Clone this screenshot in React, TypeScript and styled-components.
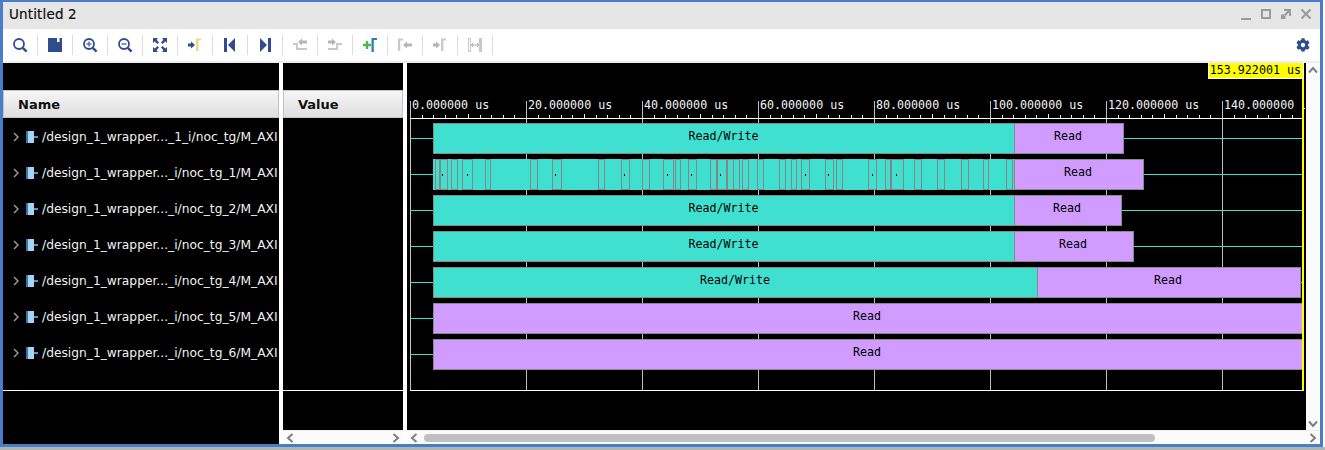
import React from "react";
import styled, { createGlobalStyle } from "styled-components";
import { FaCog } from "react-icons/fa";

const Global = createGlobalStyle`
  html, body {
    margin: 0;
    padding: 0;
    background: #fff;
  }
  body {
    font-family: "DejaVu Sans", sans-serif;
    overflow: hidden;
  }
`;

const Page = styled.div`
  width: 1325px;
  height: 450px;
  display: flex;
  flex-direction: column;
  background: #ffffff;
`;

const Frame = styled.div`
  width: 1323px;
  height: 447px;
  box-sizing: border-box;
  border: solid #4b7cc9;
  border-width: 2px 3px 3px 3px;
  display: flex;
  flex-direction: column;
  background: #fff;
`;

const BottomEdge = styled.div`
  height: 3px;
  background: #aeb6b4;
`;

const TitleBar = styled.div`
  height: 27px;
  flex: none;
  box-sizing: border-box;
  background: #e6e6e6;
  display: flex;
  align-items: center;
  justify-content: space-between;
  padding: 0 8px 3px 6px;
`;

const Title = styled.span`
  font-size: 13.5px;
  color: #111;
  letter-spacing: 0.15px;
  -webkit-text-stroke: 0.2px #111;
`;

const WindowButtons = styled.div`
  display: flex;
  gap: 8px;
`;

const WindowButton = styled.svg`
  width: 12px;
  height: 12px;
  fill: none;
  stroke: #9b9b9b;
  stroke-width: 2;
`;

const Toolbar = styled.div`
  height: 32px;
  flex: none;
  background: #fff;
  display: flex;
  align-items: center;
`;

const ToolButton = styled.div`
  width: 34px;
  height: 20px;
  flex: none;
  display: flex;
  align-items: center;
  justify-content: center;
`;

const ToolSeparator = styled.div`
  width: 1px;
  height: 20px;
  flex: none;
  background: #dcdcdc;
`;

const Settings = styled.div`
  margin-left: auto;
  margin-right: 10px;
  display: flex;
  color: #2f4d8c;
  font-size: 14px;
`;

const Panes = styled.div`
  flex: 1;
  min-height: 0;
  display: flex;
  background: #fff;
  border-top: 2px solid #eeeeee;
`;

const ListPane = styled.div<{ $width: number }>`
  width: ${(p) => p.$width}px;
  flex: none;
  display: flex;
  flex-direction: column;
  background: #000;
`;

const GapStrip = styled.div`
  height: 27px;
  flex: none;
`;

const ColumnHeader = styled.div`
  height: 28px;
  flex: none;
  box-sizing: border-box;
  border: 1px solid #c4c4c4;
  background: linear-gradient(#f6f6f6, #f0f0f0 25%, #dedede);
  display: flex;
  align-items: center;
  padding-left: 14px;
  font-size: 13px;
  font-weight: bold;
  color: #111;
`;

const Rows = styled.div`
  height: 273px;
  flex: none;
  box-sizing: border-box;
  padding-top: 1px;
  border-bottom: 1px solid #fff;
`;

const SignalRow = styled.div`
  height: 36px;
  display: flex;
  align-items: center;
  color: #f2f2f2;
  font-size: 12.25px;
  white-space: nowrap;
  overflow: hidden;
`;

const Expander = styled.svg`
  width: 6px;
  height: 10px;
  margin: 0 7px 0 10px;
  flex: none;
  fill: none;
  stroke: #9a9a9a;
  stroke-width: 1.5;
`;

const BusIcon = styled.svg`
  width: 12px;
  height: 12px;
  margin-right: 4px;
  flex: none;
`;

const ScrollBar = styled.div`
  height: 14px;
  flex: none;
  margin-top: auto;
  background: #fbfbfb;
  border-top: 1px solid #eeeeee;
  box-sizing: border-box;
  display: flex;
  align-items: center;
  justify-content: space-between;
  padding: 0 3px;
`;

const Arrow = styled.svg`
  width: 8px;
  height: 10px;
  flex: none;
  fill: none;
  stroke: #7f7f7f;
  stroke-width: 2;
`;

const ScrollThumb = styled.div`
  width: 731px;
  height: 8px;
  margin: 0 auto 0 6px;
  border-radius: 4px;
  background: #c0c0c0;
`;

const Divider = styled.div`
  width: 4px;
  flex: none;
  background: #fff;
`;

const WaveColumn = styled.div`
  width: 913px;
  flex: none;
  display: flex;
  flex-direction: column;
`;

const WaveBody = styled.div`
  flex: 1;
  min-height: 0;
  display: flex;
`;

const WaveCanvas = styled.div`
  position: relative;
  width: 899px;
  height: 367px;
  flex: none;
  background: #000;
`;

const WaveSvg = styled.svg`
  display: block;
  font-family: "DejaVu Sans Mono", monospace;
  font-size: 11.67px;
  shape-rendering: crispEdges;
  text {
    shape-rendering: auto;
  }
`;

const CursorLabel = styled.div`
  position: absolute;
  top: 0;
  right: 2px;
  width: 96px;
  height: 16px;
  box-sizing: border-box;
  border: 1px solid #fff;
  border-top: 0;
  background: #ffff00;
  color: #000;
  font-family: "DejaVu Sans Mono", monospace;
  font-size: 11.67px;
  line-height: 15px;
  text-align: right;
  padding-right: 2px;
  white-space: nowrap;
`;

const VerticalScroll = styled.div`
  width: 14px;
  flex: none;
  background: #fbfbfb;
  display: flex;
  flex-direction: column;
  align-items: center;
  justify-content: space-between;
  padding: 3px 0 2px;
  box-sizing: border-box;
`;

const ArrowV = styled.svg`
  width: 10px;
  height: 8px;
  fill: none;
  stroke: #7f7f7f;
  stroke-width: 2;
`;

const names = [
  "/design_1_wrapper..._1_i/noc_tg/M_AXI",
  "/design_1_wrapper..._i/noc_tg_1/M_AXI",
  "/design_1_wrapper..._i/noc_tg_2/M_AXI",
  "/design_1_wrapper..._i/noc_tg_3/M_AXI",
  "/design_1_wrapper..._i/noc_tg_4/M_AXI",
  "/design_1_wrapper..._i/noc_tg_5/M_AXI",
  "/design_1_wrapper..._i/noc_tg_6/M_AXI",
];

const TEAL = "#40e0d0";
const PURPLE = "#d09cff";
const EDGE = "#8a8a8a";

// x positions are in page pixels, the svg viewBox starts at 407,63
const bars = [
  { split: 1014, end: 1124 },
  { split: 1014, end: 1144 },
  { split: 1014, end: 1122 },
  { split: 1014, end: 1134 },
  { split: 1037, end: 1301 },
  { split: 433, end: 1303 },
  { split: 433, end: 1303 },
];

const bursts = [
  [435, 440], [439, 447], [451, 457], [462, 472], [485, 490], [530, 537], [552, 561], [598, 604],
  [621, 629], [642, 649], [663, 673], [675, 680], [688, 696], [710, 716], [717, 726], [727, 733],
  [733, 739], [742, 748], [757, 763], [779, 785], [791, 796], [801, 809], [825, 833], [836, 842],
  [868, 876], [885, 890], [891, 903], [914, 921], [937, 944], [961, 968], [983, 988], [1006, 1012],
];
const dots = [442, 467, 555, 624, 667, 691, 720, 805, 828, 872, 896];

const majors = [0, 1, 2, 3, 4, 5, 6, 7].map((i) => 411 + i * 116);
const minors = Array.from({ length: 77 }, (_, i) => 411 + i * 11.6);

const Wave = () => (
  <WaveSvg width={899} height={367} viewBox="407 63 899 367">
    {majors.map((x, i) => (
      <g key={x}>
        <rect x={x - 1} y={101} width={1} height={290} fill={i === 0 ? "#c4c4c4" : "#bdbdbd"} />
        <text x={x + 1} y={109} fill="#f4f4f4">
          {`${i * 20}.000000${i === 7 ? "" : " us"}`}
        </text>
      </g>
    ))}
    {minors.map((x, i) =>
      x < 1302 && i % 10 !== 0 ? (
        <rect key={i} x={Math.round(x) - 1} y={i % 5 === 0 ? 114 : 115} width={1} height={i % 5 === 0 ? 5 : 4} fill="#eaeaea" />
      ) : null
    )}
    <rect x={410} y={118} width={892} height={1} fill="#fff" />
    <rect x={410} y={390} width={892} height={1} fill="#fff" />

    {bars.map((b, i) => {
      const top = 123 + i * 36;
      const mid = (b.split + b.end) / 2 - 1;
      return (
        <g key={i}>
          <rect x={410} y={top + 15} width={892} height={1} fill={TEAL} />
          {b.split > 433 && (
            <rect x={433.5} y={top + 0.5} width={b.split - 433} height={30} fill={TEAL} stroke={i === 1 ? TEAL : EDGE} />
          )}
          <rect x={b.split + 0.5} y={top + 0.5} width={b.end - b.split - 1} height={30} fill={PURPLE} stroke={EDGE} />
          {b.split > 433 && i !== 1 && (
            <text x={(433 + b.split) / 2} y={top + 17} fill="#000" textAnchor="middle">
              Read/Write
            </text>
          )}
          <text x={mid} y={top + 17} fill="#000" textAnchor="middle">
            Read
          </text>
        </g>
      );
    })}

    {bursts.map(([a, b]) => (
      <rect key={a} x={a + 0.5} y={159.5} width={b - a} height={29.5} fill="none" stroke="#8f8285" />
    ))}
    {dots.map((x) => (
      <rect key={x} x={x} y={174} width={1} height={2} fill="#000" />
    ))}

    <rect x={1302} y={63} width={2} height={328} fill="#ffff00" />
    <rect x={1304} y={108} width={1} height={1} fill="#fff" />
  </WaveSvg>
);

const BLUE = "#2f4d8c";
const FAINT = "#c9c9c9";

const MagnifierIcon = ({ mark }: { mark?: "plus" | "minus" }) => (
  <svg width="16" height="16" viewBox="0 0 16 16" fill="none">
    <circle cx="7" cy="7" r="5" stroke={BLUE} strokeWidth="1.8" />
    <path d="M10.8 10.8 L14.6 14.6" stroke={BLUE} strokeWidth="2.4" />
    {mark && <path d="M4.5 7 H9.5" stroke="#5f79ad" strokeWidth="1.6" />}
    {mark === "plus" && <path d="M7 4.5 V9.5" stroke="#5f79ad" strokeWidth="1.6" />}
  </svg>
);

const SaveIcon = () => (
  <svg width="16" height="16" viewBox="0 0 16 16">
    <path d="M1 1 H15 V15 H1 Z" fill={BLUE} />
    <rect x="10" y="1" width="2.5" height="4" fill="#fff" />
  </svg>
);

const FitIcon = () => (
  <svg width="16" height="16" viewBox="0 0 16 16" fill={BLUE}>
    <path d="M1 1 H6 L4.6 2.8 L7 5.4 L5.4 7 L2.8 4.6 L1 6 Z" />
    <path d="M15 1 H10 L11.4 2.8 L9 5.4 L10.6 7 L13.2 4.6 L15 6 Z" />
    <path d="M1 15 H6 L4.6 13.2 L7 10.6 L5.4 9 L2.8 11.4 L1 10 Z" />
    <path d="M15 15 H10 L11.4 13.2 L9 10.6 L10.6 9 L13.2 11.4 L15 10 Z" />
  </svg>
);

const MarkerArrowIcon = ({ arrow, bar }: { arrow: string; bar: string }) => (
  <svg width="16" height="16" viewBox="0 0 16 16">
    <path d="M1 6.5 H4 V4.5 L8 8 L4 11.5 V9.5 H1 Z" fill={arrow} />
    <path d="M9 14 V1.5 H14 V3.5 H11.4 V14 Z" fill={bar} />
  </svg>
);

const JumpIcon = ({ dir }: { dir: "left" | "right" }) => (
  <svg width="16" height="16" viewBox="0 0 16 16" fill={BLUE}>
    {dir === "left" ? (
      <>
        <rect x="2" y="1" width="3" height="14" />
        <path d="M13 1 V15 L6 8 Z" />
      </>
    ) : (
      <>
        <rect x="11" y="1" width="3" height="14" />
        <path d="M3 1 V15 L10 8 Z" />
      </>
    )}
  </svg>
);

const EdgeIcon = ({ flip }: { flip?: boolean }) => (
  <svg width="16" height="16" viewBox="0 0 16 16" fill={FAINT}>
    {flip ? (
      <>
        <path d="M1 3.5 H5 V1.5 L9 5 L5 8.5 V6.5 H1 Z" fill="#b5b5b5" />
        <path d="M1 11 H9 V6 H15 V8 H11 V13 H1 Z" />
      </>
    ) : (
      <>
        <path d="M15 3.5 H10 V1.5 L6 5 L10 8.5 V6.5 H15 Z" fill="#b5b5b5" />
        <path d="M1 6 H6 V11 H15 V13 H4 V8 H1 Z" />
      </>
    )}
  </svg>
);

const AddMarkerIcon = () => (
  <svg width="16" height="16" viewBox="0 0 16 16">
    <path d="M1 6.8 H3.8 V4 H6.2 V6.8 H9 V9.2 H6.2 V12 H3.8 V9.2 H1 Z" fill="#4cb84c" />
    <path d="M9.5 15 V1 H15 V3 H11.8 V15 Z" fill="#2e7db5" />
  </svg>
);

const PrevMarkerIcon = () => (
  <svg width="16" height="16" viewBox="0 0 16 16">
    <path d="M1 14 V1.5 H6 V3.5 H3.2 V14 Z" fill={FAINT} />
    <path d="M15 6.5 H10 V4.5 L6 8 L10 11.5 V9.5 H15 Z" fill="#b5b5b5" />
  </svg>
);

const MeasureIcon = () => (
  <svg width="16" height="16" viewBox="0 0 16 16" fill="none" stroke={FAINT}>
    <rect x="1.5" y="1.5" width="2" height="13" />
    <rect x="12.5" y="1.5" width="2" height="13" fill={FAINT} />
    <path d="M4 8 H12 M6 6 L4.5 8 L6 10 M10 6 L11.5 8 L10 10" stroke="#aaaaaa" />
  </svg>
);

const tools = [
  <MagnifierIcon />,
  <SaveIcon />,
  <MagnifierIcon mark="plus" />,
  <MagnifierIcon mark="minus" />,
  <FitIcon />,
  <MarkerArrowIcon arrow={BLUE} bar="#ecd98a" />,
  <JumpIcon dir="left" />,
  <JumpIcon dir="right" />,
  <EdgeIcon />,
  <EdgeIcon flip />,
  <AddMarkerIcon />,
  <PrevMarkerIcon />,
  <MarkerArrowIcon arrow="#b5b5b5" bar={FAINT} />,
  <MeasureIcon />,
];

const Left = () => (
  <Arrow viewBox="0 0 8 10">
    <path d="M6.5 1 L2 5 L6.5 9" />
  </Arrow>
);
const Right = () => (
  <Arrow viewBox="0 0 8 10">
    <path d="M1.5 1 L6 5 L1.5 9" />
  </Arrow>
);

export default function App() {
  return (
    <Page>
      <Global />
      <Frame>
        <TitleBar>
          <Title>Untitled 2</Title>
          <WindowButtons>
            <WindowButton viewBox="0 0 12 12">
              <path d="M1 11 H11" />
            </WindowButton>
            <WindowButton viewBox="0 0 12 12">
              <rect x="2" y="2" width="8" height="8" />
            </WindowButton>
            <WindowButton viewBox="0 0 12 12">
              <path d="M4 2 H10 V8 M9.5 2.5 L4.5 7.5" />
              <path d="M1 6.5 H4 V8 H5.5 V11 H1 Z" fill="#9b9b9b" stroke="none" />
            </WindowButton>
            <WindowButton viewBox="0 0 12 12">
              <path d="M1.5 1.5 L10.5 10.5 M10.5 1.5 L1.5 10.5" />
            </WindowButton>
          </WindowButtons>
        </TitleBar>

        <Toolbar>
          {tools.map((icon, i) => (
            <React.Fragment key={i}>
              <ToolButton>{icon}</ToolButton>
              <ToolSeparator />
            </React.Fragment>
          ))}
          <Settings>
            <FaCog />
          </Settings>
        </Toolbar>

        <Panes>
          <ListPane $width={276}>
            <GapStrip />
            <ColumnHeader>Name</ColumnHeader>
            <Rows>
              {names.map((name) => (
                <SignalRow key={name}>
                  <Expander viewBox="0 0 6 10">
                    <path d="M1 1 L5 5 L1 9" />
                  </Expander>
                  <BusIcon viewBox="0 0 12 12">
                    <rect x="0" y="0" width="2" height="12" fill="#2f77ad" />
                    <rect x="2" y="0" width="6" height="12" fill="#a9d3ee" />
                    <rect x="8" y="5" width="4" height="2" fill="#5f93bd" />
                  </BusIcon>
                  {name}
                </SignalRow>
              ))}
            </Rows>
          </ListPane>
          <Divider />
          <ListPane $width={120}>
            <GapStrip />
            <ColumnHeader>Value</ColumnHeader>
            <Rows />
            <ScrollBar>
              <Left />
              <Right />
            </ScrollBar>
          </ListPane>
          <Divider />
          <WaveColumn>
            <WaveBody>
              <WaveCanvas>
                <Wave />
                <CursorLabel>153.922001 us</CursorLabel>
              </WaveCanvas>
              <VerticalScroll>
                <ArrowV viewBox="0 0 10 8">
                  <path d="M1 6.5 L5 2 L9 6.5" />
                </ArrowV>
                <ArrowV viewBox="0 0 10 8">
                  <path d="M1 1.5 L5 6 L9 1.5" />
                </ArrowV>
              </VerticalScroll>
            </WaveBody>
            <ScrollBar>
              <Left />
              <ScrollThumb />
              <Right />
            </ScrollBar>
          </WaveColumn>
        </Panes>
      </Frame>
      <BottomEdge />
    </Page>
  );
}
